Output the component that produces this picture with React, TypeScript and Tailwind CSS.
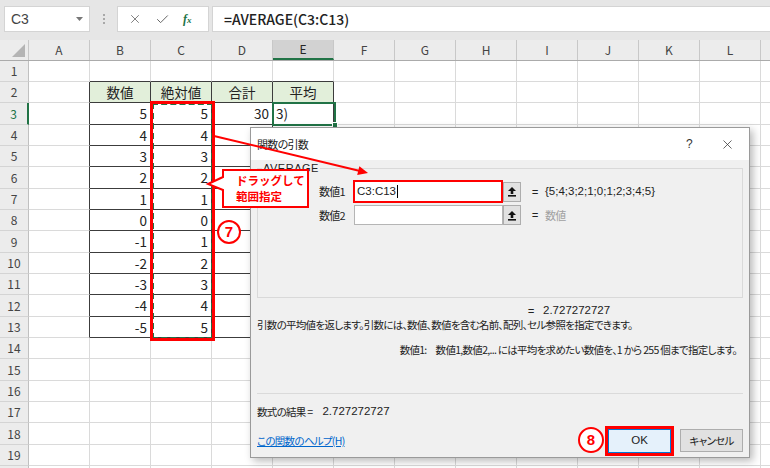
import { Check, X } from 'lucide-react';

const COLS = ['A', 'B', 'C', 'D', 'E', 'F', 'G', 'H', 'I', 'J', 'K', 'L', 'M'];
const ROW_H = ['h-[21px]', 'h-[21px]', 'h-[22px]'];

const B_VALS = [5, 4, 3, 2, 1, 0, -1, -2, -3, -4, -5];

// table spans B2:E13
const inTable = (c: number, r: number) => c >= 1 && c <= 4 && r >= 2 && r <= 13;

function cellText(c: number, r: number): { text: string; align: 'left' | 'right' | 'center' } | null {
  if (r === 2) {
    const heads = ['', '数値', '絶対値', '合計', '平均'];
    if (c >= 1 && c <= 4) return { text: heads[c], align: 'center' };
    return null;
  }
  if (r >= 3 && r <= 13) {
    const v = B_VALS[r - 3];
    if (c === 1) return { text: String(v), align: 'right' };
    if (c === 2) return { text: String(Math.abs(v)), align: 'right' };
    if (r === 3 && c === 3) return { text: '30', align: 'right' };
    if (r === 3 && c === 4) return { text: '3)', align: 'left' };
  }
  return null;
}

function Cell({ c, r }: { c: number; r: number }) {
  const t = cellText(c, r);
  const darkRight = inTable(c, r) || inTable(c + 1, r);
  const darkBottom = inTable(c, r) || inTable(c, r + 1);
  const head = r === 2 && inTable(c, r);
  return (
    <div
      className={`flex shrink-0 items-center border-r border-b px-[3px] text-[13.5px] text-[#222] ${
        c === 12 ? 'w-[40px]' : 'w-[61px]'
      } ${darkRight ? 'border-r-[#3c3c3c]' : 'border-r-[#dadada]'} ${
        darkBottom ? 'border-b-[#3c3c3c]' : 'border-b-[#dadada]'
      } ${head ? 'bg-[#e2efda]' : 'bg-white'} ${
        t?.align === 'right' ? 'justify-end' : t?.align === 'center' ? 'justify-center' : 'justify-start'
      }`}
    >
      {t?.text}
    </div>
  );
}

function RefButton() {
  return (
    <div className="flex h-[20px] w-[18px] shrink-0 items-center justify-center border border-[#adadad] bg-[#e1e1e1]">
      <svg width="10" height="11" viewBox="0 0 10 11">
        <path d="M5 1 L9 5 H6.3 V8 H3.7 V5 H1 Z" fill="#111" />
        <rect x="1" y="9" width="8" height="1.6" fill="#111" />
      </svg>
    </div>
  );
}

function ArgsDialog() {
  return (
    <div className="absolute left-[250px] top-[127px] flex h-[331px] w-[500px] flex-col border border-[#9a9a9a] bg-[#f0f0f0] text-[10.5px] tracking-[-0.7px] text-[#222] shadow-[3px_3px_8px_rgba(0,0,0,0.28)] [font-feature-settings:'palt']">
      <div className="flex h-[32px] shrink-0 items-center justify-between bg-white pl-[6px] pr-[14px]">
        <span className="text-[11px]">関数の引数</span>
        <div className="flex items-center gap-[28px]">
          <span className="font-['Liberation_Sans',sans-serif] text-[12px] text-[#333]">?</span>
          <X size={15} strokeWidth={1.2} color="#333" />
        </div>
      </div>

      <div className="flex flex-1 flex-col px-[6px]">
        <div className="relative mt-[8px] h-[130px] border border-[#d9d9d9]">
          <span className="absolute -top-[9px] left-[4px] bg-[#f0f0f0] px-[1px] font-['Liberation_Sans',sans-serif] text-[11px] tracking-[0.5px]">
            AVERAGE
          </span>
          <div className="flex flex-col gap-[3px] pt-[12px]">
            <div className="flex h-[21px] items-center">
              <span className="w-[95px] pl-[61px] text-[11px]">数値1</span>
              <div className="flex h-[23px] w-[150px] items-center border-2 border-[#ff0000] bg-white pl-[2px] font-['Liberation_Sans',sans-serif] text-[11.5px] tracking-normal">
                C3:C13
                <span className="ml-[1px] h-[13px] w-px bg-black" />
              </div>
              <RefButton />
              <span className="ml-[11px] w-[13px] font-bold">=</span>
              <span className="font-['Liberation_Sans',sans-serif] text-[11.5px] tracking-normal">{'{5;4;3;2;1;0;1;2;3;4;5}'}</span>
            </div>
            <div className="flex h-[20px] items-center">
              <span className="w-[96px] pl-[61px] text-[11px]">数値2</span>
              <div className="h-[20px] w-[149px] border border-[#b5b5b5] bg-white" />
              <RefButton />
              <span className="ml-[11px] w-[13px] font-bold">=</span>
              <span className="text-[11px] text-[#a0a0a0]">数値</span>
            </div>
          </div>
        </div>

        <div className="mt-[6px] flex h-[13px] items-center pl-[271px]">
          <span className="w-[15px] font-bold">=</span>
          <span className="font-['Liberation_Sans',sans-serif] text-[11.5px] tracking-normal">2.727272727</span>
        </div>
        <div className="mt-[1px] flex h-[14px] items-center">
          引数の平均値を返します。引数には、数値、数値を含む名前、配列、セル参照を指定できます。
        </div>
        <div className="mt-[11px] flex h-[14px] items-center justify-end pr-[6px]">
          <span className="mr-[9px]">数値1:</span>
          数値1,数値2,... には平均を求めたい数値を、1 から 255 個まで指定します。
        </div>

        <div className="mt-[36px] border-t border-[#dadada]" />

        <div className="mt-[11px] flex h-[14px] items-center">
          <span className="mr-[10px]">数式の結果 =</span>
          <span className="font-['Liberation_Sans',sans-serif] text-[11.5px] tracking-normal">2.727272727</span>
        </div>

        <div className="mt-[9px] flex h-[25px] items-center justify-between">
          <span className="text-[#0066cc] underline">この関数のヘルプ(H)</span>
          <div className="flex items-center gap-[9px]">
            <div className="flex h-[24px] w-[63px] items-center justify-center border border-[#0078d7] bg-[#e5f1fb] font-['Liberation_Sans',sans-serif] text-[11.5px] tracking-normal outline-[3px] outline-[#ff0000] outline-solid">
              OK
            </div>
            <div className="flex h-[23px] w-[63px] items-center justify-center border border-[#adadad] bg-[#e1e1e1]">
              キャンセル
            </div>
          </div>
        </div>
      </div>
    </div>
  );
}

export default function App() {
  const rows = Array.from({ length: 20 }, (_, i) => i + 1);
  return (
    <div className="relative h-[468px] w-[770px] overflow-hidden bg-white font-['Noto_Sans_CJK_JP',sans-serif]">
      {/* formula bar */}
      <div className="flex h-[40px] items-start bg-[#e6e6e6] pl-[4px] pt-[6px]">
        <div className="flex h-[26px] w-[86px] items-center justify-between border border-[#d4d4d4] bg-white pl-[6px] pr-[6px] font-['Liberation_Sans',sans-serif] text-[14px] text-[#444]">
          C3
          <svg width="7" height="4" viewBox="0 0 7 4">
            <path d="M0 0 H7 L3.5 4 Z" fill="#777" />
          </svg>
        </div>
        <div className="flex h-[26px] w-[27px] flex-col items-center justify-center gap-[2px]">
          <span className="h-[2px] w-[2px] bg-[#a8a8a8]" />
          <span className="h-[2px] w-[2px] bg-[#a8a8a8]" />
          <span className="h-[2px] w-[2px] bg-[#a8a8a8]" />
        </div>
        <div className="flex h-[26px] w-[92px] items-center gap-[13px] border border-[#d4d4d4] bg-white pl-[10px]">
          <X size={14} strokeWidth={1.4} color="#666" />
          <Check size={15} strokeWidth={1.6} color="#666" />
          <span className="font-['Liberation_Serif',serif] text-[12px] font-bold text-[#217346] italic">
            f<span className="text-[9px]">x</span>
          </span>
        </div>
        <div className="ml-[3px] -mr-[4px] flex h-[26px] flex-1 items-center border border-[#d4d4d4] bg-white pl-[11px] text-[14px] font-medium text-[#222]">
          =AVERAGE(C3:C13)
        </div>
      </div>

      {/* column headers */}
      <div className="flex h-[21px] border-b border-[#ababab] bg-[#ececec]">
        <div className="relative w-[29px] shrink-0 border-r border-[#c8c8c8]">
          <svg className="absolute bottom-[3px] right-[3px]" width="13" height="13" viewBox="0 0 13 13">
            <path d="M13 0 V13 H0 Z" fill="#b4b4b4" />
          </svg>
        </div>
        {COLS.map((c, i) => (
          <div
            key={c}
            className={`flex shrink-0 items-center justify-center border-r border-[#c8c8c8] text-[12px] ${
              i === 12 ? 'w-[40px]' : 'w-[61px]'
            } ${c === 'E' ? 'border-b-2 border-b-[#217346] bg-[#d2d2d2] text-[#262626]' : 'text-[#444]'}`}
          >
            {c}
          </div>
        ))}
      </div>

      {/* rows */}
      {rows.map((r, ri) => (
        <div key={r} className={`flex ${ROW_H[ri % 3]}`}>
          <div
            className={`flex w-[29px] shrink-0 items-center justify-center border-b border-[#d4d4d4] bg-[#ececec] text-[12px] ${
              r === 3 ? 'border-r-2 border-r-[#217346] bg-[#d8d8d8] text-[#217346]' : 'border-r border-r-[#c0c0c0] text-[#444]'
            }`}
          >
            {r}
          </div>
          {COLS.map((c, ci) => (
            <Cell key={c} c={ci} r={r} />
          ))}
        </div>
      ))}

      {/* active cell E3 */}
      <div className="absolute left-[272px] top-[102px] h-[24px] w-[64px] border-2 border-[#217346]">
        <div className="absolute -bottom-[4px] -right-[4px] h-[6px] w-[6px] border border-white bg-[#217346]" />
      </div>

      {/* copy range marquee + red frame */}
      <div className="absolute left-[152px] top-[103px] h-[236px] w-[61px] border-2 border-dashed border-[#217346]" />
      <div className="absolute left-[150px] top-[101px] h-[240px] w-[65px] border-[3px] border-[#ff0000]" />

      <ArgsDialog />

      {/* annotations */}
      <svg className="pointer-events-none absolute left-0 top-0" width="770" height="468">
        <line x1="214" y1="136" x2="360" y2="171" stroke="#ff0000" strokeWidth="2" />
        <polygon points="368,173 357.2,175.1 359.4,166.3" fill="#ff0000" />
        <path d="M223 170 H308 V207 H223 V190 L208 184 L223 177 Z" fill="#fff" stroke="#ff0000" strokeWidth="2" />
        <circle cx="229" cy="232" r="11" fill="#fff" stroke="#ff0000" strokeWidth="2" />
        <circle cx="591" cy="440" r="12" fill="#fff" stroke="#ff0000" strokeWidth="2" />
      </svg>
      <div className="pointer-events-none absolute left-[236px] top-[172px] flex flex-col text-[11.5px] leading-[16px] font-bold text-[#ff0000]">
        <span>ドラッグして</span>
        <span>範囲指定</span>
      </div>
      <div className="pointer-events-none absolute left-[218px] top-[221px] flex h-[22px] w-[22px] items-center justify-center font-['Liberation_Sans',sans-serif] text-[15px] font-bold text-[#ff0000]">
        7
      </div>
      <div className="pointer-events-none absolute left-[579px] top-[428px] flex h-[24px] w-[24px] items-center justify-center font-['Liberation_Sans',sans-serif] text-[15px] font-bold text-[#ff0000]">
        8
      </div>
    </div>
  );
}
